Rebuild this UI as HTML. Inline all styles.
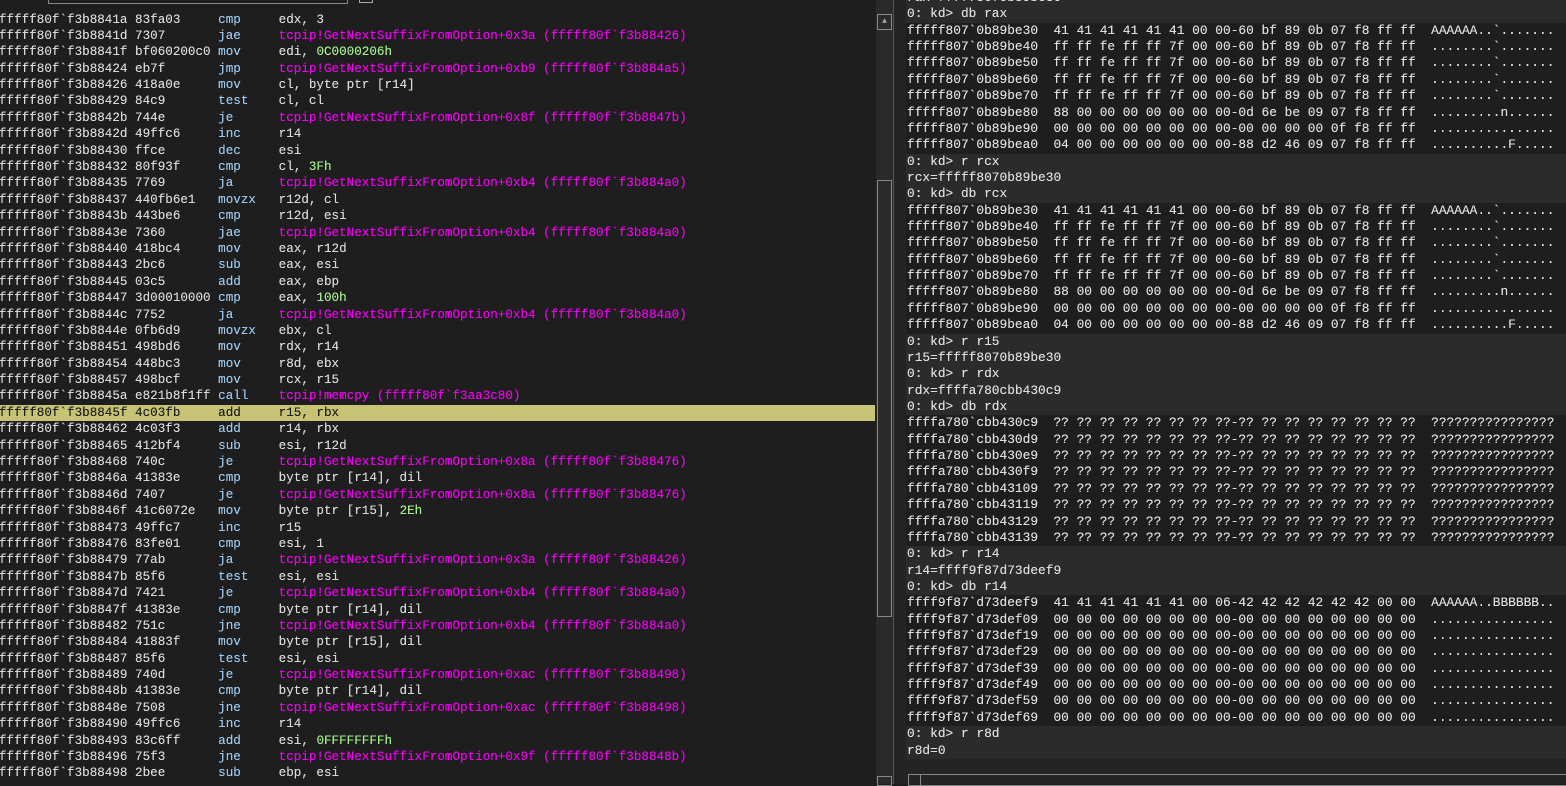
<!DOCTYPE html>
<html><head><meta charset="utf-8"><style>
*{margin:0;padding:0;box-sizing:border-box}
body{width:1566px;height:784px;overflow:hidden;background:#1e1e1e;position:relative;font-family:"Liberation Mono","DejaVu Sans Mono",monospace}
.l{position:absolute;left:-1px;width:876px;height:16.4px;line-height:16.4px;font-size:12.6px;color:#dadada;white-space:pre;text-shadow:0 0 0.3px currentColor}
.hl{background:#c6c375;color:#1e1e1e}
.hl .m{color:#1e1e1e}
.m{color:#9cc8f0}.p{color:#f000f0}.g{color:#a4f08c}
.r{position:absolute;left:906px;width:660px;height:16.36px;line-height:16.36px;font-size:12.85px;color:#e0e0e0;white-space:pre;padding-left:1px;background:#1e1e1e;text-shadow:0 0 0.3px currentColor}
.c{background:#2b2b2b}
</style></head><body>
<div style="position:absolute;left:48px;top:-2px;width:300px;height:6px;border:1px solid #888"></div>
<div style="position:absolute;left:359px;top:-2px;width:14px;height:5px;border:1px solid #aaa"></div>
<div id="L"></div>
<div style="position:absolute;left:876px;top:0;width:17px;height:784px;background:#2a2a2a"></div>
<div style="position:absolute;left:877px;top:14px;width:15px;height:16px;border:1px solid #888;color:#aaa;font-size:8px;text-align:center;line-height:13px">▲</div>
<div style="position:absolute;left:877px;top:180px;width:15px;height:437px;border:1px solid #888"></div>
<div style="position:absolute;left:877px;top:776px;width:15px;height:10px;border:1px solid #888"></div>
<div style="position:absolute;left:893px;top:0;width:1px;height:784px;background:#555"></div>
<div style="position:absolute;left:894px;top:0;width:12px;height:784px;background:#242424"></div>
<div style="position:absolute;left:906px;top:0;width:660px;height:784px;background:#242424"></div>
<div id="R"></div>
<div style="position:absolute;left:908px;top:774px;width:658px;height:12px;border:1px solid #888;border-right:none"></div>
<div style="position:absolute;left:920px;top:775px;width:1px;height:10px;background:#888"></div>
<script>
const L=[
["fffff80f`f3b8841a 83fa03","cmp",'edx, 3'],
["fffff80f`f3b8841d 7307","jae",'<span class=p>tcpip!GetNextSuffixFromOption+0x3a (fffff80f`f3b88426)</span>'],
["fffff80f`f3b8841f bf060200c0","mov",'edi, <span class=g>0C0000206h</span>'],
["fffff80f`f3b88424 eb7f","jmp",'<span class=p>tcpip!GetNextSuffixFromOption+0xb9 (fffff80f`f3b884a5)</span>'],
["fffff80f`f3b88426 418a0e","mov",'cl, byte ptr [r14]'],
["fffff80f`f3b88429 84c9","test",'cl, cl'],
["fffff80f`f3b8842b 744e","je",'<span class=p>tcpip!GetNextSuffixFromOption+0x8f (fffff80f`f3b8847b)</span>'],
["fffff80f`f3b8842d 49ffc6","inc",'r14'],
["fffff80f`f3b88430 ffce","dec",'esi'],
["fffff80f`f3b88432 80f93f","cmp",'cl, <span class=g>3Fh</span>'],
["fffff80f`f3b88435 7769","ja",'<span class=p>tcpip!GetNextSuffixFromOption+0xb4 (fffff80f`f3b884a0)</span>'],
["fffff80f`f3b88437 440fb6e1","movzx",'r12d, cl'],
["fffff80f`f3b8843b 443be6","cmp",'r12d, esi'],
["fffff80f`f3b8843e 7360","jae",'<span class=p>tcpip!GetNextSuffixFromOption+0xb4 (fffff80f`f3b884a0)</span>'],
["fffff80f`f3b88440 418bc4","mov",'eax, r12d'],
["fffff80f`f3b88443 2bc6","sub",'eax, esi'],
["fffff80f`f3b88445 03c5","add",'eax, ebp'],
["fffff80f`f3b88447 3d00010000","cmp",'eax, <span class=g>100h</span>'],
["fffff80f`f3b8844c 7752","ja",'<span class=p>tcpip!GetNextSuffixFromOption+0xb4 (fffff80f`f3b884a0)</span>'],
["fffff80f`f3b8844e 0fb6d9","movzx",'ebx, cl'],
["fffff80f`f3b88451 498bd6","mov",'rdx, r14'],
["fffff80f`f3b88454 448bc3","mov",'r8d, ebx'],
["fffff80f`f3b88457 498bcf","mov",'rcx, r15'],
["fffff80f`f3b8845a e821b8f1ff","call",'<span class=p>tcpip!memcpy (fffff80f`f3aa3c80)</span>'],
["fffff80f`f3b8845f 4c03fb","add",'r15, rbx'],
["fffff80f`f3b88462 4c03f3","add",'r14, rbx'],
["fffff80f`f3b88465 412bf4","sub",'esi, r12d'],
["fffff80f`f3b88468 740c","je",'<span class=p>tcpip!GetNextSuffixFromOption+0x8a (fffff80f`f3b88476)</span>'],
["fffff80f`f3b8846a 41383e","cmp",'byte ptr [r14], dil'],
["fffff80f`f3b8846d 7407","je",'<span class=p>tcpip!GetNextSuffixFromOption+0x8a (fffff80f`f3b88476)</span>'],
["fffff80f`f3b8846f 41c6072e","mov",'byte ptr [r15], <span class=g>2Eh</span>'],
["fffff80f`f3b88473 49ffc7","inc",'r15'],
["fffff80f`f3b88476 83fe01","cmp",'esi, 1'],
["fffff80f`f3b88479 77ab","ja",'<span class=p>tcpip!GetNextSuffixFromOption+0x3a (fffff80f`f3b88426)</span>'],
["fffff80f`f3b8847b 85f6","test",'esi, esi'],
["fffff80f`f3b8847d 7421","je",'<span class=p>tcpip!GetNextSuffixFromOption+0xb4 (fffff80f`f3b884a0)</span>'],
["fffff80f`f3b8847f 41383e","cmp",'byte ptr [r14], dil'],
["fffff80f`f3b88482 751c","jne",'<span class=p>tcpip!GetNextSuffixFromOption+0xb4 (fffff80f`f3b884a0)</span>'],
["fffff80f`f3b88484 41883f","mov",'byte ptr [r15], dil'],
["fffff80f`f3b88487 85f6","test",'esi, esi'],
["fffff80f`f3b88489 740d","je",'<span class=p>tcpip!GetNextSuffixFromOption+0xac (fffff80f`f3b88498)</span>'],
["fffff80f`f3b8848b 41383e","cmp",'byte ptr [r14], dil'],
["fffff80f`f3b8848e 7508","jne",'<span class=p>tcpip!GetNextSuffixFromOption+0xac (fffff80f`f3b88498)</span>'],
["fffff80f`f3b88490 49ffc6","inc",'r14'],
["fffff80f`f3b88493 83c6ff","add",'esi, <span class=g>0FFFFFFFFh</span>'],
["fffff80f`f3b88496 75f3","jne",'<span class=p>tcpip!GetNextSuffixFromOption+0x9f (fffff80f`f3b8848b)</span>'],
["fffff80f`f3b88498 2bee","sub",'ebp, esi']];
let h='';
L.forEach((a,i)=>{h+=`<div class="l${i==24?' hl':''}" style="top:${(11.5+i*16.39).toFixed(2)}px">${a[0].padEnd(29)}<span class=m>${a[1].padEnd(8)}</span>${a[2]}</div>`});
document.getElementById('L').innerHTML=h;
const A=["41 41 41 41 41 41 00 00-60 bf 89 0b 07 f8 ff ff  AAAAAA..`.......",
"ff ff fe ff ff 7f 00 00-60 bf 89 0b 07 f8 ff ff  ........`.......",
"ff ff fe ff ff 7f 00 00-60 bf 89 0b 07 f8 ff ff  ........`.......",
"ff ff fe ff ff 7f 00 00-60 bf 89 0b 07 f8 ff ff  ........`.......",
"ff ff fe ff ff 7f 00 00-60 bf 89 0b 07 f8 ff ff  ........`.......",
"88 00 00 00 00 00 00 00-0d 6e be 09 07 f8 ff ff  .........n......",
"00 00 00 00 00 00 00 00-00 00 00 00 0f f8 ff ff  ................",
"04 00 00 00 00 00 00 00-88 d2 46 09 07 f8 ff ff  ..........F....."];
const ab=["30","40","50","60","70","80","90","a0"];
const Q="?? ?? ?? ?? ?? ?? ?? ??-?? ?? ?? ?? ?? ?? ?? ??  ????????????????";
const qa=["cbb430c9","cbb430d9","cbb430e9","cbb430f9","cbb43109","cbb43119","cbb43129","cbb43139"];
const Z="00 00 00 00 00 00 00 00-00 00 00 00 00 00 00 00  ................";
const za=["d73deef9","d73def09","d73def19","d73def29","d73def39","d73def49","d73def59","d73def69"];
let R=[["c","rax=fffff8070b89be30"],["c","0: kd> db rax"]];
A.forEach((x,i)=>R.push(["","fffff807`0b89be"+ab[i]+"  "+x]));
R.push(["c","0: kd> r rcx"],["c","rcx=fffff8070b89be30"],["c","0: kd> db rcx"]);
A.forEach((x,i)=>R.push(["","fffff807`0b89be"+ab[i]+"  "+x]));
R.push(["c","0: kd> r r15"],["c","r15=fffff8070b89be30"],["c","0: kd> r rdx"],["c","rdx=ffffa780cbb430c9"],["c","0: kd> db rdx"]);
qa.forEach(a=>R.push(["","ffffa780`"+a+"  "+Q]));
R.push(["c","0: kd> r r14"],["c","r14=ffff9f87d73deef9"],["c","0: kd> db r14"]);
za.forEach((a,i)=>R.push(["","ffff9f87`"+a+"  "+(i==0?"41 41 41 41 41 41 00 06-42 42 42 42 42 42 00 00  AAAAAA..BBBBBB..":Z)]));
R.push(["c","0: kd> r r8d"],["c","r8d=0"]);
h='';
R.forEach((a,i)=>{h+=`<div class="r ${a[0]}" style="top:${(-2+i*16.36-8).toFixed(2)}px">${a[1]}</div>`});
document.getElementById('R').innerHTML=h;
</script>
</body></html>
